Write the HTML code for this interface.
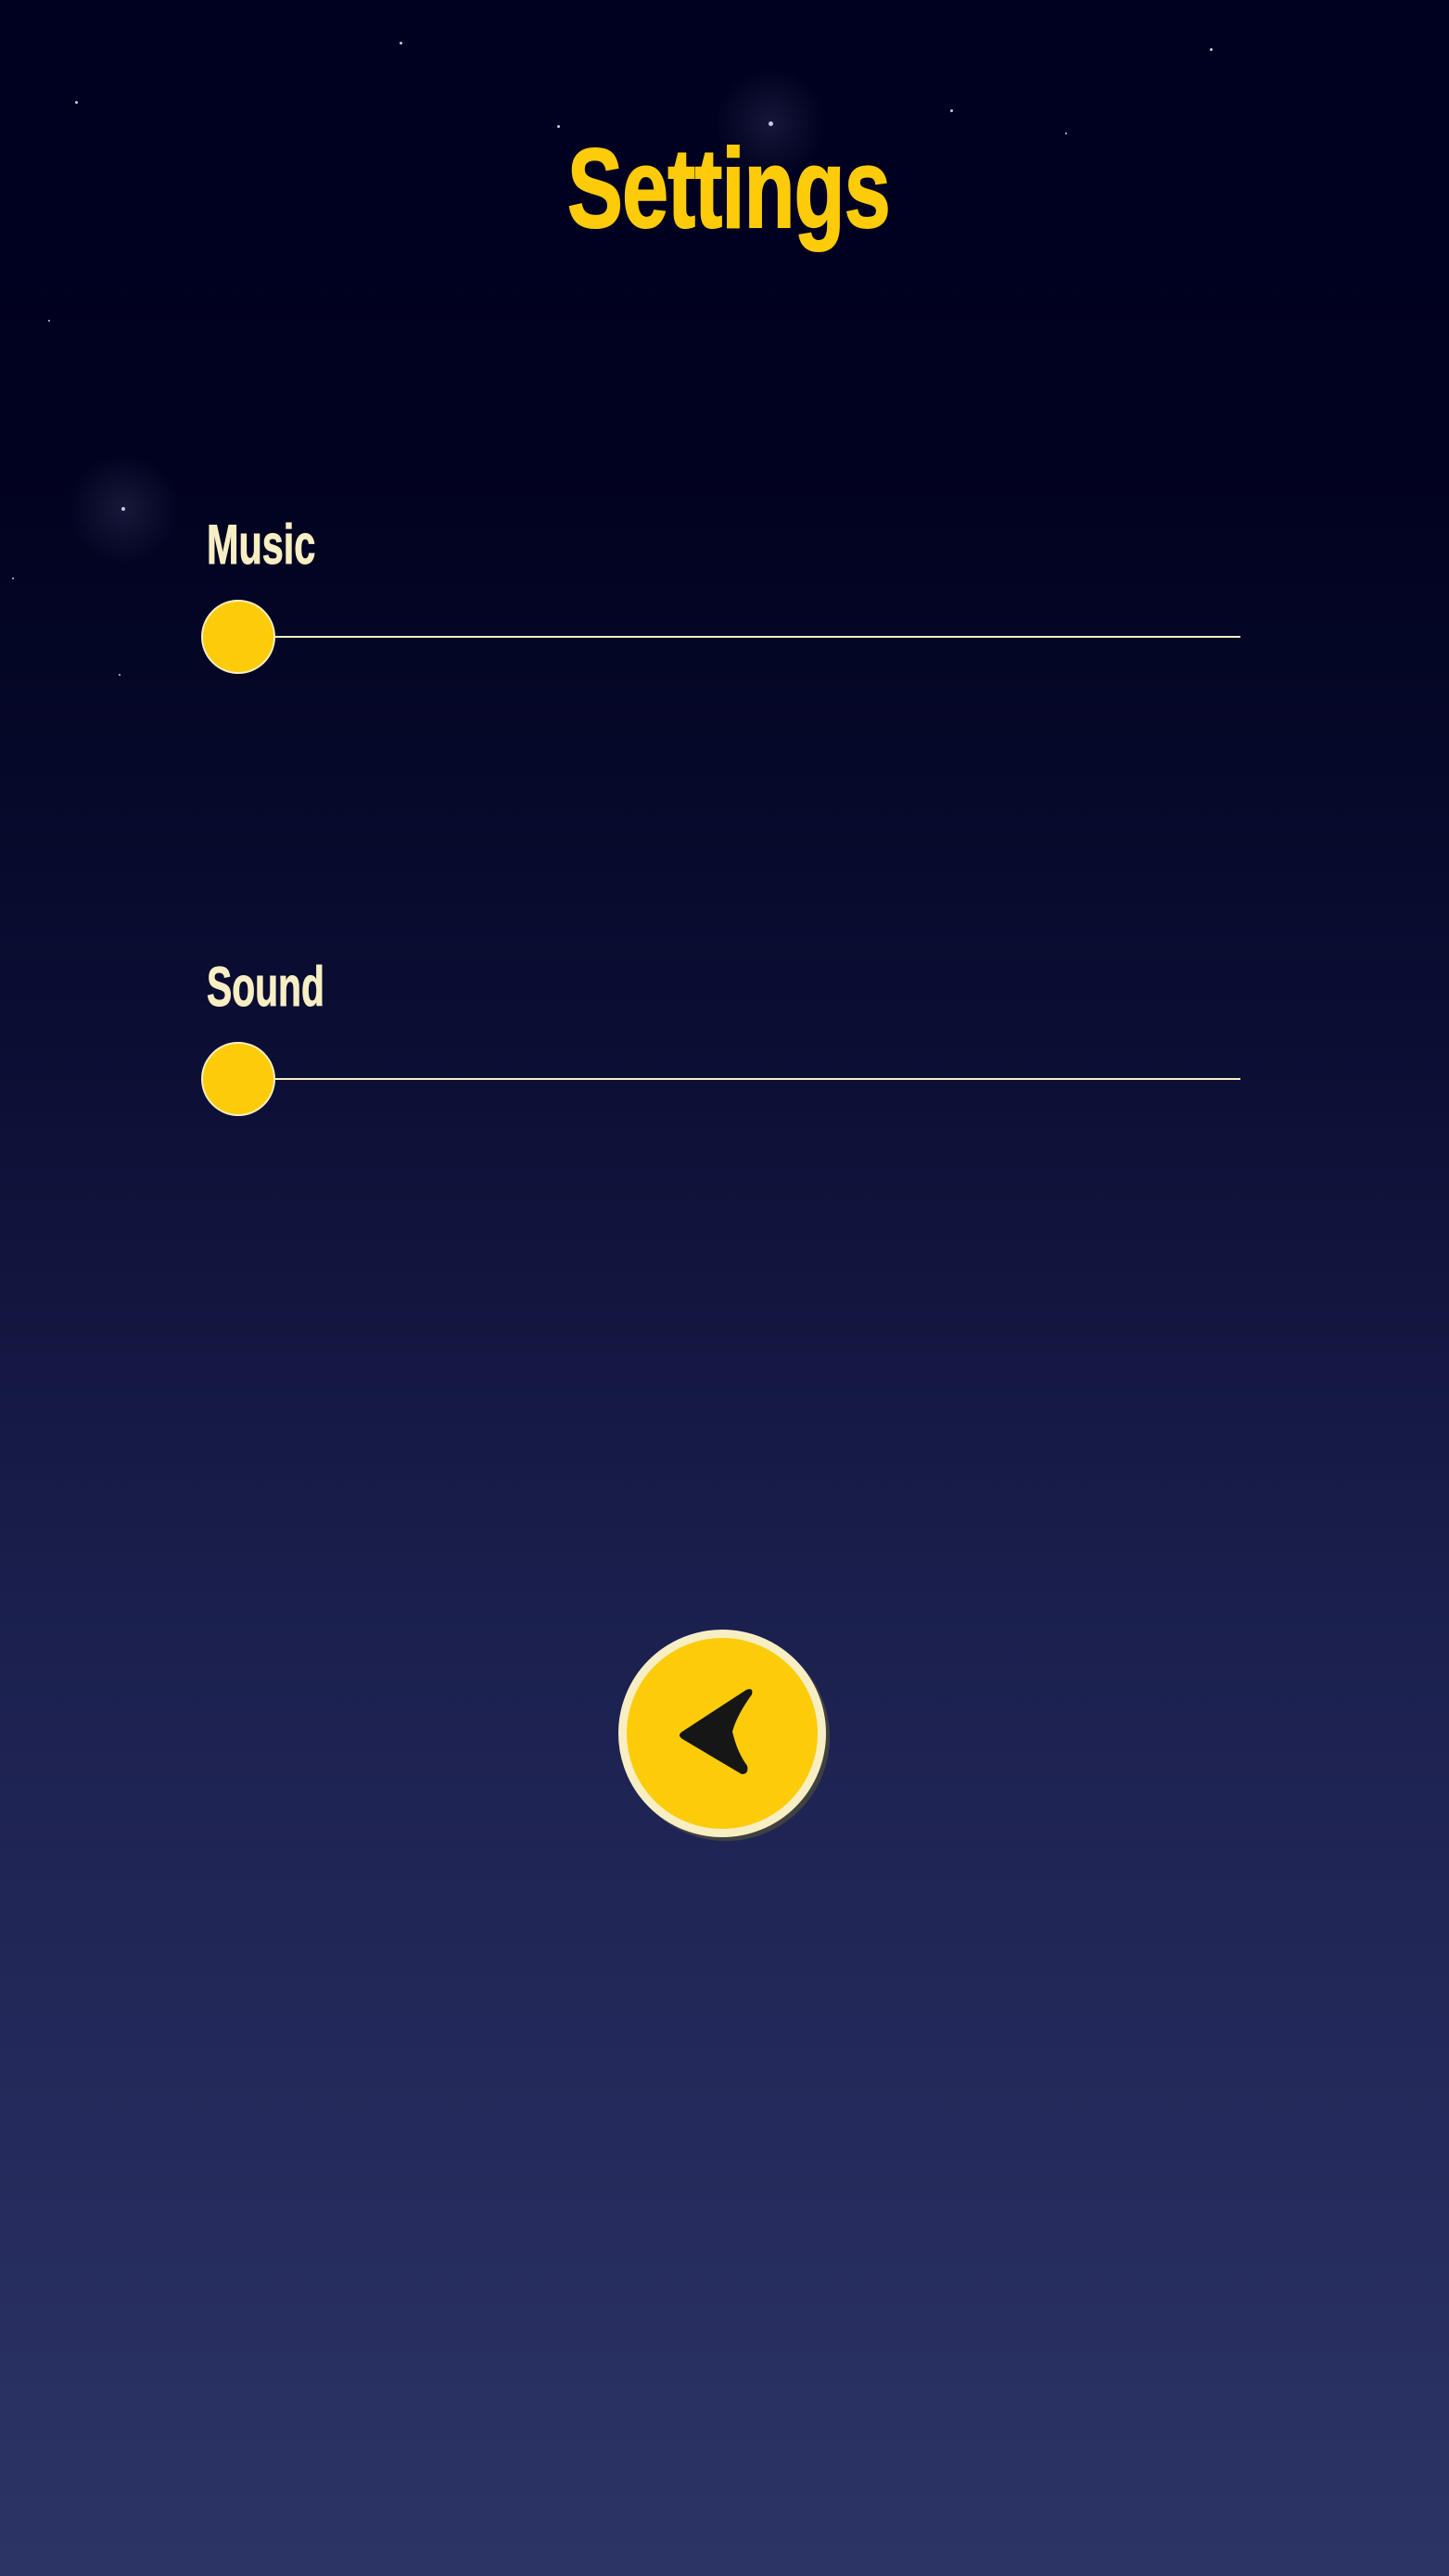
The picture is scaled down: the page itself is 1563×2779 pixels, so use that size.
<!DOCTYPE html>
<html><head><meta charset="utf-8"><style>
html,body{margin:0;padding:0}
body{width:1563px;height:2779px;position:relative;overflow:hidden;background:linear-gradient(to bottom,#000020 0%,#01021f 18%,#0b0e33 40%,#1c2150 65%,#2c3466 100%);font-family:"Liberation Sans Narrow","Liberation Sans",sans-serif}
.s{position:absolute;border-radius:50%;background:#c8c8dc}
.g{position:absolute;border-radius:50%;background:radial-gradient(circle,rgba(120,120,170,.18),rgba(0,0,0,0) 70%)}
.t{position:absolute;font-weight:bold;white-space:nowrap;transform-origin:0 0}
.line{position:absolute;left:297px;width:1041px;height:2px;background:#f8eec4}
.knob{position:absolute;left:217px;width:76px;height:76px;border-radius:50%;background:#fccc0a;border:2px solid #f8eec4}
</style></head><body>
<div class="g" style="left:771px;top:73px;width:120px;height:120px"></div>
<div class="g" style="left:73px;top:489px;width:120px;height:120px"></div>
<div class="s" style="left:81px;top:109px;width:3px;height:3px"></div>
<div class="s" style="left:431px;top:45px;width:3px;height:3px"></div>
<div class="s" style="left:601px;top:135px;width:3px;height:3px"></div>
<div class="s" style="left:829px;top:131px;width:5px;height:5px"></div>
<div class="s" style="left:1025px;top:118px;width:3px;height:3px"></div>
<div class="s" style="left:1149px;top:143px;width:2px;height:2px"></div>
<div class="s" style="left:1305px;top:52px;width:3px;height:3px"></div>
<div class="s" style="left:52px;top:345px;width:2px;height:2px"></div>
<div class="s" style="left:131px;top:547px;width:4px;height:4px"></div>
<div class="s" style="left:13px;top:623px;width:2px;height:2px"></div>
<div class="s" style="left:128px;top:727px;width:2px;height:2px"></div>

<div class="t" style="left:612px;top:142px;font-size:122px;line-height:122px;color:#fccc0a;transform:scaleX(0.735);letter-spacing:-1px;-webkit-text-stroke:2px #fccc0a">Settings</div>

<div class="t" style="left:223px;top:558px;font-size:60px;line-height:60px;color:#f8eec4;transform:scaleX(0.69);-webkit-text-stroke:1px #f8eec4">Music</div>
<div class="line" style="top:686px"></div>
<div class="knob" style="top:647px"></div>

<div class="t" style="left:223px;top:1035px;font-size:60px;line-height:60px;color:#f8eec4;transform:scaleX(0.68);-webkit-text-stroke:1px #f8eec4">Sound</div>
<div class="line" style="top:1163px"></div>
<div class="knob" style="top:1124px"></div>

<div style="position:absolute;left:671px;top:1762px;width:224px;height:224px;border-radius:50%;background:#3f4040"></div>
<div style="position:absolute;left:667px;top:1758px;width:206px;height:206px;border-radius:50%;background:#fccc0a;border:9px solid #f8eec4"></div>
<svg style="position:absolute;left:0;top:0" width="1563" height="2779"><path d="M736 1868 L805 1823 Q813 1820 811 1828 Q795 1850 790 1868 Q795 1890 806 1905 Q808 1914 800 1914 L736 1876 Q730 1872 736 1868 Z" fill="#161616"/></svg>
</body></html>
